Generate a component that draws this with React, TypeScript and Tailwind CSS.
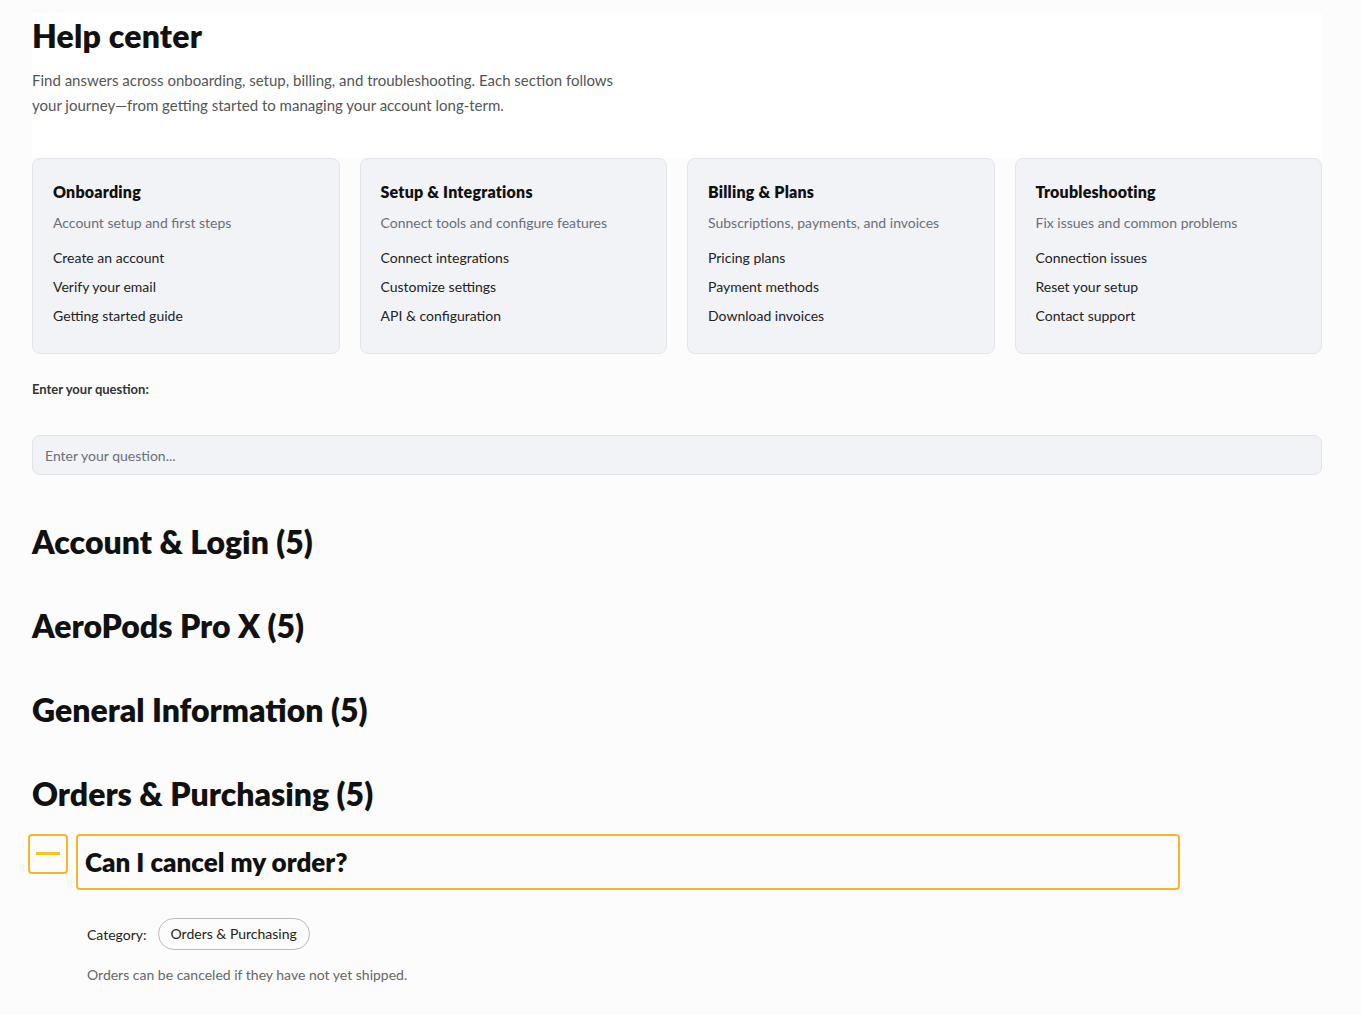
import { useState } from "react";

interface HelpCard {
  title: string;
  subtitle: string;
  links: string[];
}

const cards: HelpCard[] = [
  {
    title: "Onboarding",
    subtitle: "Account setup and first steps",
    links: ["Create an account", "Verify your email", "Getting started guide"],
  },
  {
    title: "Setup & Integrations",
    subtitle: "Connect tools and configure features",
    links: ["Connect integrations", "Customize settings", "API & configuration"],
  },
  {
    title: "Billing & Plans",
    subtitle: "Subscriptions, payments, and invoices",
    links: ["Pricing plans", "Payment methods", "Download invoices"],
  },
  {
    title: "Troubleshooting",
    subtitle: "Fix issues and common problems",
    links: ["Connection issues", "Reset your setup", "Contact support"],
  },
];

const categories = [
  "Account & Login (5)",
  "AeroPods Pro X (5)",
  "General Information (5)",
];

export default function App() {
  const [query, setQuery] = useState("");
  const [open, setOpen] = useState(true);

  return (
    <div className="min-h-screen bg-[#fcfcfc] font-['Lato','Noto_Sans',sans-serif] text-[#111]">
      <div className="ml-8 mr-[39px] pt-[13px]">
        <header className="bg-white pb-[40px] pt-[4px]">
          <h1 className="text-[32px] font-extrabold leading-[38px] tracking-[0.2px]">Help center</h1>
          <p className="mt-[13px] max-w-[600px] text-[15px] leading-[25px] text-[#555]">
            Find answers across onboarding, setup, billing, and troubleshooting. Each section follows
            your journey—from getting started to managing your account long-term.
          </p>
        </header>

        <div className="grid grid-cols-4 gap-5">
          {cards.map((c) => (
            <div
              key={c.title}
              className="h-[196px] rounded-lg border border-[#e2e5eb] bg-[#f1f3f7] px-5 pt-[22px]"
            >
              <h2 className="text-[16px] font-extrabold leading-[22px] tracking-[0.2px]">{c.title}</h2>
              <p className="mt-[10px] text-[14px] leading-[20px] text-[#6b6f76]">{c.subtitle}</p>
              <ul className="mt-[15px] flex flex-col gap-[9px] text-[14px] leading-[20px]">
                {c.links.map((l) => (
                  <li key={l}>
                    <a href="#" className="text-[#222]">
                      {l}
                    </a>
                  </li>
                ))}
              </ul>
            </div>
          ))}
        </div>

        <div className="mt-[26px]">
          <label className="block text-[13px] font-bold leading-[18px] text-[#333]">
            Enter your question:
          </label>
          <input
            value={query}
            onChange={(e) => setQuery(e.target.value)}
            placeholder="Enter your question..."
            className="mt-[37px] h-10 w-full rounded-lg border border-[#dfe3ea] bg-[#f1f3f7] px-3 text-[14px] text-[#333] outline-none placeholder:text-[#6b6f76]"
          />
        </div>

        <div className="mt-[48px] flex flex-col gap-[46px]">
          {categories.map((c) => (
            <h2 key={c} className="text-[32px] font-extrabold leading-[38px]">
              {c}
            </h2>
          ))}
          <section>
            <h2 className="text-[32px] font-extrabold leading-[38px]">Orders &amp; Purchasing (5)</h2>
            <div className="-ml-1 mt-[21px] flex items-start gap-2">
              <button
                onClick={() => setOpen(!open)}
                className="flex h-10 w-10 shrink-0 items-start justify-center rounded border-2 border-[#f7b52b] pt-[16px]"
              >
                <span className="block h-[3px] w-6 bg-[#f5c518]" />
              </button>
              <div className="flex h-[56px] w-[1104px] items-center rounded border-2 border-[#f7b52b] px-[7px]">
                <h3 className="text-[26px] font-extrabold leading-[30px]">Can I cancel my order?</h3>
              </div>
            </div>
            {open && (
              <div className="ml-[55px] mt-[28px]">
                <div className="flex items-center gap-[11px]">
                  <span className="text-[14px] text-[#222]">Category:</span>
                  <span className="rounded-full border border-[#bbb] px-3 py-[5px] text-[14px] leading-[20px] text-[#222]">
                    Orders &amp; Purchasing
                  </span>
                </div>
                <p className="mt-[15px] text-[14px] leading-[20px] text-[#666]">
                  Orders can be canceled if they have not yet shipped.
                </p>
              </div>
            )}
          </section>
        </div>
      </div>
    </div>
  );
}
